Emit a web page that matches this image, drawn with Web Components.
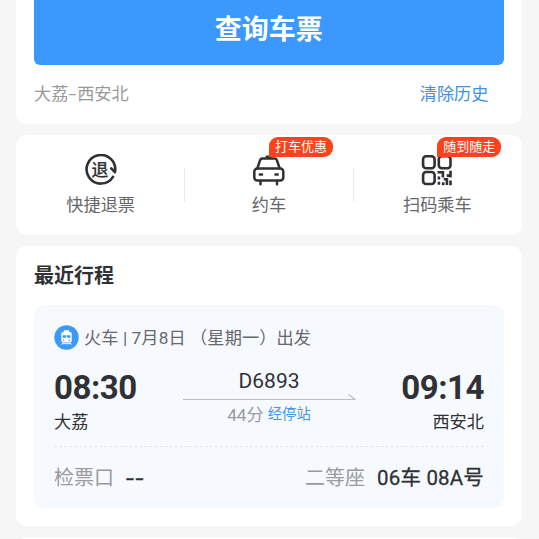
<!DOCTYPE html>
<html lang="zh-CN">
<head>
<meta charset="utf-8">
<title>车票查询</title>
<style>
html,body{margin:0;height:539px;overflow:hidden;background:#f6f6f6}
body{font-family:Roboto,"Noto Sans CJK SC",sans-serif;color:#303134}
</style>
</head>
<body>
<ticket-page></ticket-page>
<script>
class Base extends HTMLElement{
  constructor(){super();this.attachShadow({mode:'open'}).innerHTML='<style>*{box-sizing:border-box}:host{box-sizing:border-box}'+this.css()+'</style>'+this.html();}
  css(){return ''} html(){return '<slot></slot>'}
}
customElements.define('panel-card',class extends Base{
  css(){return ':host{display:block;width:506px;background:#fff;border-radius:11px}'}
});
customElements.define('search-button',class extends Base{
  css(){return ':host{display:block}button{display:block;width:100%;height:65px;border:0;border-radius:0 0 6px 6px;background:#3b99fe;color:#fff;font:700 27px/36px "Noto Sans CJK SC",sans-serif;padding:0 0 9px}'}
  html(){return '<button><slot></slot></button>'}
});
customElements.define('history-row',class extends Base{
  css(){return ':host{display:flex;justify-content:space-between;padding:16px 15px 0 0;font-size:17.2px;line-height:26px;color:#999}.c{color:#3e91e4}'}
  html(){return '<span><slot></slot></span><span class="c"><slot name="clear"></slot></span>'}
});
customElements.define('refund-icon',class extends Base{
  css(){return ':host{display:block;width:34px;height:34px}svg{display:block}text{font:500 16.8px "Noto Sans CJK SC",sans-serif}'}
  html(){return '<svg width="34" height="34" viewBox="0 0 34 34"><path d="M29 22.9A14.3 14.3 0 1 1 30.9 18.2L27.2 14.4" fill="none" stroke="#303134" stroke-width="2.6" stroke-linejoin="round" stroke-linecap="round"/><text x="7.6" y="22.3" fill="#303134" stroke="#303134" stroke-width=".2">退</text></svg>'}
});
customElements.define('taxi-icon',class extends Base{
  css(){return ':host{display:block;width:34px;height:34px}svg{display:block}'}
  html(){return '<svg width="34" height="34" viewBox="0 0 34 34" fill="none" stroke="#303134" stroke-width="2.5" stroke-linecap="round" stroke-linejoin="round"><path d="M5.3 14.5L8.2 5.8Q8.7 4.4 10.2 4.4H22.8Q24.3 4.4 24.8 5.8L27.7 14.5"/><rect x="2.3" y="14.5" width="29" height="12" rx="3"/><path d="M14.7 2.8h3.8M7.8 20.5h2.2M23.5 20.5h2.2M8.5 27v3.3M25 27v3.3"/></svg>'}
});
customElements.define('qr-icon',class extends Base{
  css(){return ':host{display:block;width:34px;height:34px}svg{display:block}'}
  html(){return '<svg width="34" height="34" viewBox="0 0 34 34" fill="none" stroke="#303134" stroke-width="2.6"><rect x="3.1" y="2.3" width="11.5" height="12" rx="3"/><rect x="18.8" y="2.3" width="11.7" height="12" rx="3"/><rect x="3.1" y="18" width="11.5" height="12" rx="3"/><path d="M17.5 18.2h5.4v5.2M18.9 22.4v3M18.9 27.8v3M23.7 25.2h3.2v5.8M30.5 16.8v6.7M26.7 21.6h4M30.5 26.4v4.8M23.2 28.2v3"/></svg>'}
});
customElements.define('service-item',class extends Base{
  css(){return ':host{display:flex;flex:1;position:relative;flex-direction:column;align-items:center;padding-top:18.5px}.l{font-size:17.2px;line-height:26px;color:#66676a;margin-top:4px}.b{position:absolute;left:50%;top:2px;margin-left:0;height:20px;border-radius:9px 9px 9px 0;background:#fb421b;color:#fff;font-size:13px;line-height:19px;padding:0 6px;white-space:nowrap}:host([plain]) .b{display:none}'}
  html(){return '<slot name="icon"></slot><span class="l"><slot></slot></span><span class="b"><slot name="badge"></slot></span>'}
});
customElements.define('service-bar',class extends Base{
  css(){return ':host{display:flex;height:100px;padding:0 1px}i{width:1px;height:34px;margin-top:33px;background:#e8e8ea}'}
  html(){return '<slot name="a"></slot><i></i><slot name="b"></slot><i></i><slot name="c"></slot>'}
});
customElements.define('train-badge',class extends Base{
  css(){return ':host{display:block;width:25px;height:25px}svg{display:block}'}
  html(){return '<svg width="25" height="25" viewBox="0 0 25 25"><circle cx="12.5" cy="12.5" r="12.2" fill="#3b99f8"/><path d="M9.8 5.3h5.4v1.6h-5.4zM9 7h7q1.7 0 1.7 1.7v7.1q0 1.7-1.7 1.7H9q-1.7 0-1.7-1.7V8.7Q7.3 7 9 7z" fill="#fff"/><path d="M8.6 10.3h3.5v2.5H8.6zM12.9 10.3h3.5v2.5h-3.5z" fill="#3b99f8"/><circle cx="9.6" cy="15.3" r=".7" fill="#3b99f8"/><circle cx="15.4" cy="15.3" r=".7" fill="#3b99f8"/><path d="M9 17.5L7.5 19.5M16 17.5l1.5 2M8.5 18.7h8" stroke="#fff" stroke-width="1"/></svg>'}
});
customElements.define('route-line',class extends Base{
  css(){return ':host{display:flex;flex-direction:column;align-items:center;width:173px}.n{font-size:21px;line-height:25px}svg{display:block;margin-top:-1px}.d{font-size:17.2px;line-height:22px;color:#999ba0;margin-top:3px;display:flex;gap:4px}.s{font-size:14.4px;color:#4297ef}'}
  html(){return '<span class="n"><slot></slot></span><svg width="173" height="8" fill="none" stroke="#b9bec5" stroke-width="1.2"><path d="M0 6.5H172L165.5 1.2"/></svg><span class="d"><slot name="time"></slot><span class="s"><slot name="stops"></slot></span></span>'}
});
customElements.define('station-time',class extends Base{
  css(){return ':host{display:flex;flex-direction:column;width:84px}:host([end]){align-items:flex-end}.t{font-size:33px;font-weight:700;line-height:38px;white-space:nowrap;letter-spacing:-.45px}.p{font-size:17.2px;line-height:24px;margin-top:3px;letter-spacing:0}'}
  html(){return '<span class="t"><slot></slot></span><span class="p"><slot name="place"></slot></span>'}
});
customElements.define('trip-ticket',class extends Base{
  css(){return ':host{display:block;height:203px;border-radius:9px;background:#f6faff;padding:0 20px}.h{display:flex;padding-top:20px;gap:5px;height:64px}.r{display:flex;justify-content:space-between;height:77px}.f{display:flex;justify-content:space-between;border-top:1px dashed #e3e7ed;padding-top:17px;line-height:28px;font-size:20px}.g{color:#999ba0;margin-right:12px}b{font-weight:400;font-size:20.5px;letter-spacing:.17px;-webkit-text-stroke:.3px}.w{display:inline-block;letter-spacing:1.2px;transform:scaleX(1.4);transform-origin:0 50%}'}
  html(){return '<div class="h"><train-badge></train-badge><slot name="head"></slot></div><div class="r"><slot name="from"></slot><slot name="line"></slot><slot name="to"></slot></div><div class="f"><span><span class="g">检票口</span><b class="w">--</b></span><span><span class="g">二等座</span><b>06车 08A号</b></span></div>'}
});
customElements.define('trip-date',class extends Base{
  css(){return ':host{display:block;font-size:17.2px;line-height:27px;color:#66686c;white-space:pre;letter-spacing:.1px}'}
});
customElements.define('section-title',class extends Base{
  css(){return ':host{display:block;font-size:20px;font-weight:700;line-height:30px}'}
});
customElements.define('ticket-page',class extends Base{
  css(){return ':host{display:flex;flex-direction:column;gap:11px;padding-left:16px;width:539px;height:539px;overflow:hidden}panel-card{flex:none}.s{height:124px;padding:0 18.5px 0 18px;border-radius:0 0 11px 11px}.m{height:100px}.t{height:280px;padding:15px 18px}.t trip-ticket{margin-top:14px}.e{height:40px}.dash{display:inline-block;transform:scaleX(1.6);padding:0 2px}'}
  html(){return `
  <panel-card class="s"><search-button>查询车票</search-button><history-row>大荔<span class="dash">-</span>西安北<span slot="clear">清除历史</span></history-row></panel-card>
  <panel-card class="m"><service-bar>
    <service-item slot="a" plain><refund-icon slot="icon"></refund-icon>快捷退票</service-item>
    <service-item slot="b"><taxi-icon slot="icon"></taxi-icon>约车<span slot="badge">打车优惠</span></service-item>
    <service-item slot="c"><qr-icon slot="icon"></qr-icon>扫码乘车<span slot="badge">随到随走</span></service-item>
  </service-bar></panel-card>
  <panel-card class="t"><section-title>最近行程</section-title>
    <trip-ticket><trip-date slot="head">火车 | 7月8日 （星期一）出发</trip-date>
      <station-time slot="from">08:30<span slot="place">大荔</span></station-time>
      <route-line slot="line">D6893<span slot="time">44分</span><span slot="stops">经停站</span></route-line>
      <station-time slot="to" end>09:14<span slot="place">西安北</span></station-time>
    </trip-ticket></panel-card>
  <panel-card class="e"></panel-card>`}
});
</script>
</body>
</html>
